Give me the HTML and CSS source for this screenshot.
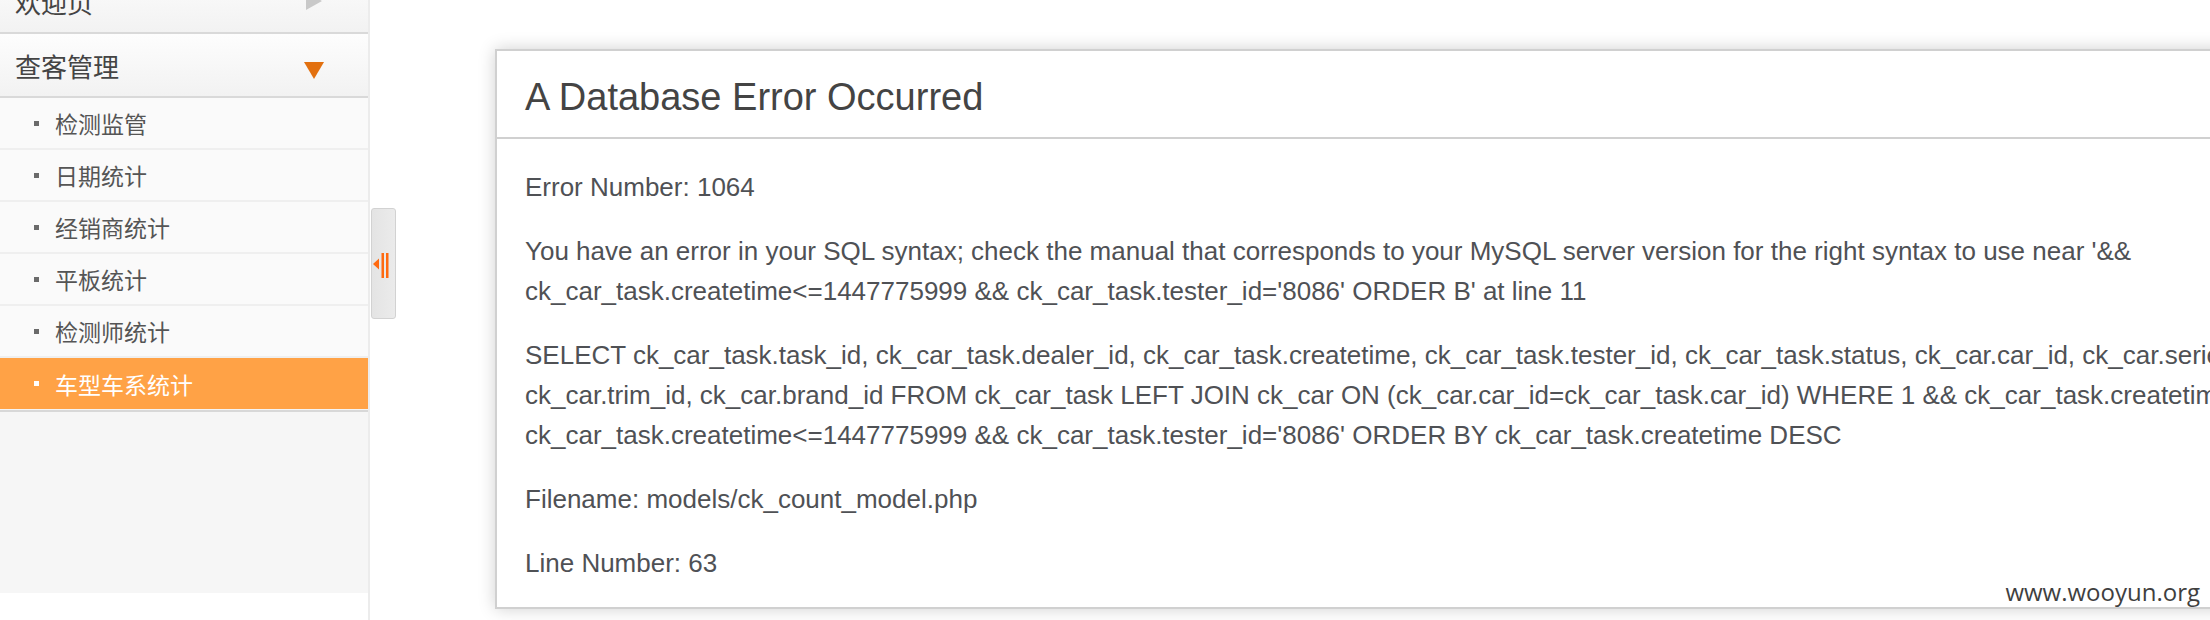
FILE: index.html
```html
<!DOCTYPE html>
<html lang="zh-CN">
<head>
<meta charset="utf-8">
<title>A Database Error Occurred</title>
<link rel="stylesheet" href="styles.css">
</head>
<body>
<div class="page">
  <aside class="sidebar">
    <div class="group-head group-head--first">
      <span class="group-title">欢迎页</span>
      <svg class="arrow-right" width="18" height="18" viewBox="0 0 18 18"><polygon points="1,0 17,9 1,18" fill="#c9c9c9"/></svg>
    </div>
    <div class="group-head">
      <span class="group-title">查客管理</span>
      <svg class="arrow-down" width="20" height="17" viewBox="0 0 20 17"><polygon points="0,0 20,0 10,17" fill="#e2700f"/></svg>
    </div>
    <ul class="sub">
      <li class="sub-item"><span class="dot"></span>检测监管</li>
      <li class="sub-item"><span class="dot"></span>日期统计</li>
      <li class="sub-item"><span class="dot"></span>经销商统计</li>
      <li class="sub-item"><span class="dot"></span>平板统计</li>
      <li class="sub-item"><span class="dot"></span>检测师统计</li>
      <li class="sub-item sub-item--active"><span class="dot"></span>车型车系统计</li>
    </ul>
    <div class="nav-fill"></div>
  </aside>
  <div class="toggle">
    <svg width="17" height="25" viewBox="0 0 17 25"><polygon points="0,11 6,5.5 6,16.5" fill="#ff6a10"/><rect x="8.5" y="0" width="2.5" height="25" fill="#ff6a10"/><rect x="13" y="0" width="2.5" height="25" fill="#ff6a10"/></svg>
  </div>
  <main class="main">
    <div class="card">
      <h1 class="card-title">A Database Error Occurred</h1>
      <p class="msg">Error Number: 1064</p>
      <p class="msg">You have an error in your SQL syntax; check the manual that corresponds to your MySQL server version for the right syntax to use near '&amp;&amp;<br>ck_car_task.createtime&lt;=1447775999 &amp;&amp; ck_car_task.tester_id='8086' ORDER B' at line 11</p>
      <p class="msg">SELECT ck_car_task.task_id, ck_car_task.dealer_id, ck_car_task.createtime, ck_car_task.tester_id, ck_car_task.status, ck_car.car_id, ck_car.series_id,<br>ck_car.trim_id, ck_car.brand_id FROM ck_car_task LEFT JOIN ck_car ON (ck_car.car_id=ck_car_task.car_id) WHERE 1 &amp;&amp; ck_car_task.createtime&gt;=1447689600 &amp;&amp;<br>ck_car_task.createtime&lt;=1447775999 &amp;&amp; ck_car_task.tester_id='8086' ORDER BY ck_car_task.createtime DESC</p>
      <p class="msg">Filename: models/ck_count_model.php</p>
      <p class="msg">Line Number: 63</p>
    </div>
  </main>
</div>
<div class="watermark">www.wooyun.org</div>
</body>
</html>
```
FILE: styles.css
```css
html, body {
  margin: 0;
  padding: 0;
  background: #ffffff;
}
body {
  width: 2210px;
  height: 620px;
  overflow: hidden;
  position: relative;
  font-family: "Liberation Sans", Arial, sans-serif;
}
.page {
  display: flex;
  align-items: flex-start;
  height: 620px;
}

/* Sidebar */
.sidebar {
  width: 368px;
  height: 620px;
  flex-shrink: 0;
  border-right: 2px solid #ececec;
  display: flex;
  flex-direction: column;
  font-family: "Noto Sans CJK SC", "Noto Sans", sans-serif;
}
.group-head {
  height: 62px;
  border-bottom: 2px solid #d9d9d9;
  background: linear-gradient(#fdfdfd, #f2f2f2);
  display: flex;
  align-items: center;
  justify-content: space-between;
  padding: 0 44px 0 15px;
  flex-shrink: 0;
}
.group-head--first {
  margin-top: -30px;
}
.group-title {
  font-size: 26px;
  color: #444444;
}
.arrow-right {
  margin-right: 1px;
}
.arrow-down {
  margin-top: 10px;
}
.sub {
  list-style: none;
  margin: 0;
  padding: 0;
}
.sub-item {
  height: 50px;
  border-bottom: 2px solid #efefef;
  background: #fafafa;
  display: flex;
  align-items: center;
  padding-left: 34px;
  font-size: 23px;
  color: #555555;
}
.dot {
  width: 5px;
  height: 5px;
  background: #6a6a6a;
  margin-right: 16px;
  flex-shrink: 0;
}
.sub-item--active {
  background: #ffa246;
  color: #ffffff;
  height: 51px;
  border-bottom: 1px solid #f4f4f4;
}
.sub-item--active .dot {
  background: #ffffff;
}
.nav-fill {
  height: 181px;
  border-top: 2px solid #d8d8d8;
  background: #f6f6f6;
}

/* Collapse toggle */
.toggle {
  flex-shrink: 0;
  width: 22px;
  height: 109px;
  margin-top: 208px;
  margin-left: 1px;
  border: 1px solid #d2d2d2;
  border-radius: 3px;
  background: linear-gradient(90deg, #e4e4e4, #ebebeb);
  display: flex;
  align-items: center;
  justify-content: flex-start;
  padding-left: 1px;
  box-sizing: content-box;
}
.toggle svg {
  margin-top: 4px;
}

/* Main */
.main {
  flex-shrink: 0;
  padding: 49px 0 0 99px;
}
.card {
  width: 2400px;
  border: 2px solid #d0d0d0;
  box-shadow: 0 0 16px #d0d0d0;
  background: #ffffff;
  color: #4f5155;
}
.card-title {
  margin: 0 0 28px;
  padding: 26px 28px 20px;
  font-size: 38px;
  line-height: 40px;
  font-weight: normal;
  color: #444444;
  border-bottom: 2px solid #d0d0d0;
}
.msg {
  margin: 24px 28px;
  font-size: 26px;
  line-height: 40px;
}

/* Watermark */
.watermark {
  position: absolute;
  right: 10px;
  top: 577px;
  font-family: "Open Sans", "DejaVu Sans", sans-serif;
  font-size: 24px;
  line-height: 30px;
  color: #3f3f3f;
}
```
